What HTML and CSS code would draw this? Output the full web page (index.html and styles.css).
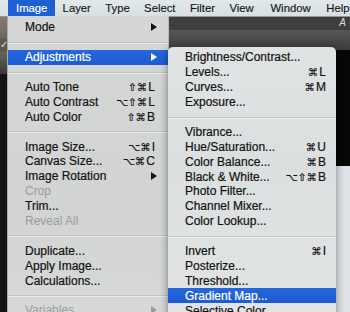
FILE: index.html
```html
<!DOCTYPE html>
<html>
<head>
<meta charset="utf-8">
<link rel="stylesheet" href="styles.css">
</head>
<body>
<div class="screen">
  <div class="menubar">
    <span class="mb-item active">Image</span>
    <span class="mb-item">Layer</span>
    <span class="mb-item">Type</span>
    <span class="mb-item">Select</span>
    <span class="mb-item">Filter</span>
    <span class="mb-item mb-view">View</span>
    <span class="mb-item mb-window">Window</span>
    <span class="mb-item">Help</span>
  </div>
  <div class="workspace">
    <div class="left-strip">
      <div class="ls-photo"></div>
      <div class="ls-check">✓</div>
      <div class="ls-gray"></div>
      <div class="ls-dark"></div>
    </div>
    <div class="canvas-area">
      <div class="doc-title"><span>A</span></div>
      <div class="doc-ruler"></div>
      <div class="doc-dark"></div>
      <div class="doc-light"></div>
    </div>

    <div class="menu main-menu">
      <div class="row"><span>Mode</span><svg class="arrow" width="6" height="8" viewBox="0 0 6 8"><polygon points="0,0 6,4 0,8"/></svg></div>
      <div class="sep"></div>
      <div class="row hl"><span>Adjustments</span><svg class="arrow" width="6" height="8" viewBox="0 0 6 8"><polygon points="0,0 6,4 0,8"/></svg></div>
      <div class="sep"></div>
      <div class="row"><span>Auto Tone</span><span class="sc"><i>⇧⌘</i>L</span></div>
      <div class="row"><span>Auto Contrast</span><span class="sc"><i>⌥⇧⌘</i>L</span></div>
      <div class="row"><span>Auto Color</span><span class="sc"><i>⇧⌘</i>B</span></div>
      <div class="sep"></div>
      <div class="row"><span>Image Size...</span><span class="sc"><i>⌥⌘</i>I</span></div>
      <div class="row"><span>Canvas Size...</span><span class="sc"><i>⌥⌘</i>C</span></div>
      <div class="row"><span>Image Rotation</span><svg class="arrow" width="6" height="8" viewBox="0 0 6 8"><polygon points="0,0 6,4 0,8"/></svg></div>
      <div class="row dis"><span>Crop</span></div>
      <div class="row"><span>Trim...</span></div>
      <div class="row dis"><span>Reveal All</span></div>
      <div class="sep"></div>
      <div class="row"><span>Duplicate...</span></div>
      <div class="row"><span>Apply Image...</span></div>
      <div class="row"><span>Calculations...</span></div>
      <div class="sep"></div>
      <div class="row dis"><span>Variables</span><svg class="arrow" width="6" height="8" viewBox="0 0 6 8"><polygon points="0,0 6,4 0,8"/></svg></div>
    </div>

    <div class="menu sub-menu">
      <div class="row"><span>Brightness/Contrast...</span></div>
      <div class="row"><span>Levels...</span><span class="sc"><i>⌘</i>L</span></div>
      <div class="row"><span>Curves...</span><span class="sc"><i>⌘</i>M</span></div>
      <div class="row"><span>Exposure...</span></div>
      <div class="sep"></div>
      <div class="row"><span>Vibrance...</span></div>
      <div class="row"><span>Hue/Saturation...</span><span class="sc"><i>⌘</i>U</span></div>
      <div class="row"><span>Color Balance...</span><span class="sc"><i>⌘</i>B</span></div>
      <div class="row"><span>Black &amp; White...</span><span class="sc"><i>⌥⇧⌘</i>B</span></div>
      <div class="row"><span>Photo Filter...</span></div>
      <div class="row"><span>Channel Mixer...</span></div>
      <div class="row"><span>Color Lookup...</span></div>
      <div class="sep"></div>
      <div class="row"><span>Invert</span><span class="sc"><i>⌘</i>I</span></div>
      <div class="row"><span>Posterize...</span></div>
      <div class="row"><span>Threshold...</span></div>
      <div class="row hl"><span>Gradient Map...</span></div>
      <div class="row"><span>Selective Color...</span></div>
    </div>
  </div>
</div>
</body>
</html>
```

FILE: styles.css
```css
html, body {
  margin: 0;
  padding: 0;
}
body {
  width: 350px;
  height: 312px;
  overflow: hidden;
  background: #111;
  font-family: "Liberation Sans", Arial, sans-serif;
}
.screen {
  width: 350px;
  height: 312px;
  display: flex;
  flex-direction: column;
  overflow: hidden;
}
.menubar {
  height: 16px;
  flex: none;
  display: flex;
  align-items: stretch;
  padding-left: 8px;
  background: linear-gradient(#e2e9eb, #d6dfe2);
  box-shadow: 0 1px 0 #8f9799;
  position: relative;
  z-index: 2;
  font-size: 11.3px;
  color: #161616;
  white-space: nowrap;
  -webkit-text-stroke: 0.15px currentColor;
}
.mb-item {
  display: flex;
  align-items: center;
  padding: 0 7.2px;
  line-height: 16px;
}
.mb-item:first-child {
  padding-left: 8px;
  padding-right: 8px;
}
.mb-item.mb-view {
  padding-right: 9.6px;
}
.mb-item.mb-window {
  padding-right: 8.4px;
}
.mb-item.active {
  background: #1f5fd4;
  color: #fff;
}
.workspace {
  flex: 1;
  display: flex;
  position: relative;
}
.left-strip {
  width: 8px;
  display: flex;
  flex-direction: column;
}
.ls-photo {
  height: 22px;
  background: linear-gradient(#857e70, #6d675b);
}
.ls-check {
  height: 14px;
  background: #5e5a50;
  color: #ddd;
  font-size: 10px;
  line-height: 14px;
  overflow: hidden;
}
.ls-gray {
  height: 22px;
  background: linear-gradient(#6a665c, #3a3833);
}
.ls-dark {
  flex: 1;
  background: #141414;
}
.canvas-area {
  flex: 1;
  display: flex;
  flex-direction: column;
}
.doc-title {
  height: 14px;
  background: #3e3e3e;
  text-align: right;
  color: #ddd;
  font-size: 10px;
  font-style: italic;
  line-height: 14px;
  padding-right: 4px;
}
.doc-ruler {
  height: 20px;
  background: linear-gradient(#565656, #3c3c3c);
}
.doc-dark {
  height: 116px;
  background: #070707;
}
.doc-light {
  flex: 1;
  background: #dfe3e7;
}

/* menus */
.menu {
  position: absolute;
  font-size: 12px;
  color: #121212;
  -webkit-text-stroke: 0.2px currentColor;
}
.main-menu {
  left: 8px;
  top: 0;
  width: 160px;
  height: 320px;
  padding-top: 4px;
  box-sizing: border-box;
  background: linear-gradient(#d5d7d6, #d2d4d3 60%, #d8dad9);
  box-shadow: 1px 0 0 #b9bbbb, -1px 0 0 #a9abab;
  z-index: 3;
}
.sub-menu {
  left: 168px;
  top: 31px;
  width: 168px;
  height: 300px;
  padding-top: 3px;
  box-sizing: border-box;
  background: linear-gradient(#e0e3e3, #dcdfdf 40%, #e4e6e6);
  border-radius: 5px 5px 0 0;
  box-shadow: 0 2px 9px rgba(0,0,0,0.45);
  z-index: 4;
}
.row {
  height: 14.9px;
  display: flex;
  align-items: center;
  justify-content: space-between;
  white-space: nowrap;
}
.main-menu .row {
  padding: 0 13px 0 17px;
}
.main-menu .row .arrow {
  margin-right: -2px;
}
.sub-menu .row {
  padding: 0 10px 0 17px;
}
.row.hl {
  background: linear-gradient(#2566dc, #1c5bd3);
  color: #fff;
}
.row.dis {
  color: #9a9c9c;
  -webkit-text-stroke: 0;
}
.arrow {
  fill: #121212;
}
.row.hl .arrow {
  fill: #fff;
}
.row.dis .arrow {
  fill: #9a9c9c;
}
.sc {
  display: flex;
  align-items: center;
}
.sc i {
  font-style: normal;
  font-family: "DejaVu Sans", sans-serif;
  font-size: 10.5px;
  margin-right: 1px;
}
.sep {
  height: 14.9px;
  display: flex;
  align-items: center;
}
.sep::before {
  content: "";
  display: block;
  width: 100%;
  height: 1px;
  background: #c2c4c4;
  box-shadow: 0 1px 0 rgba(255,255,255,0.5);
}
```
